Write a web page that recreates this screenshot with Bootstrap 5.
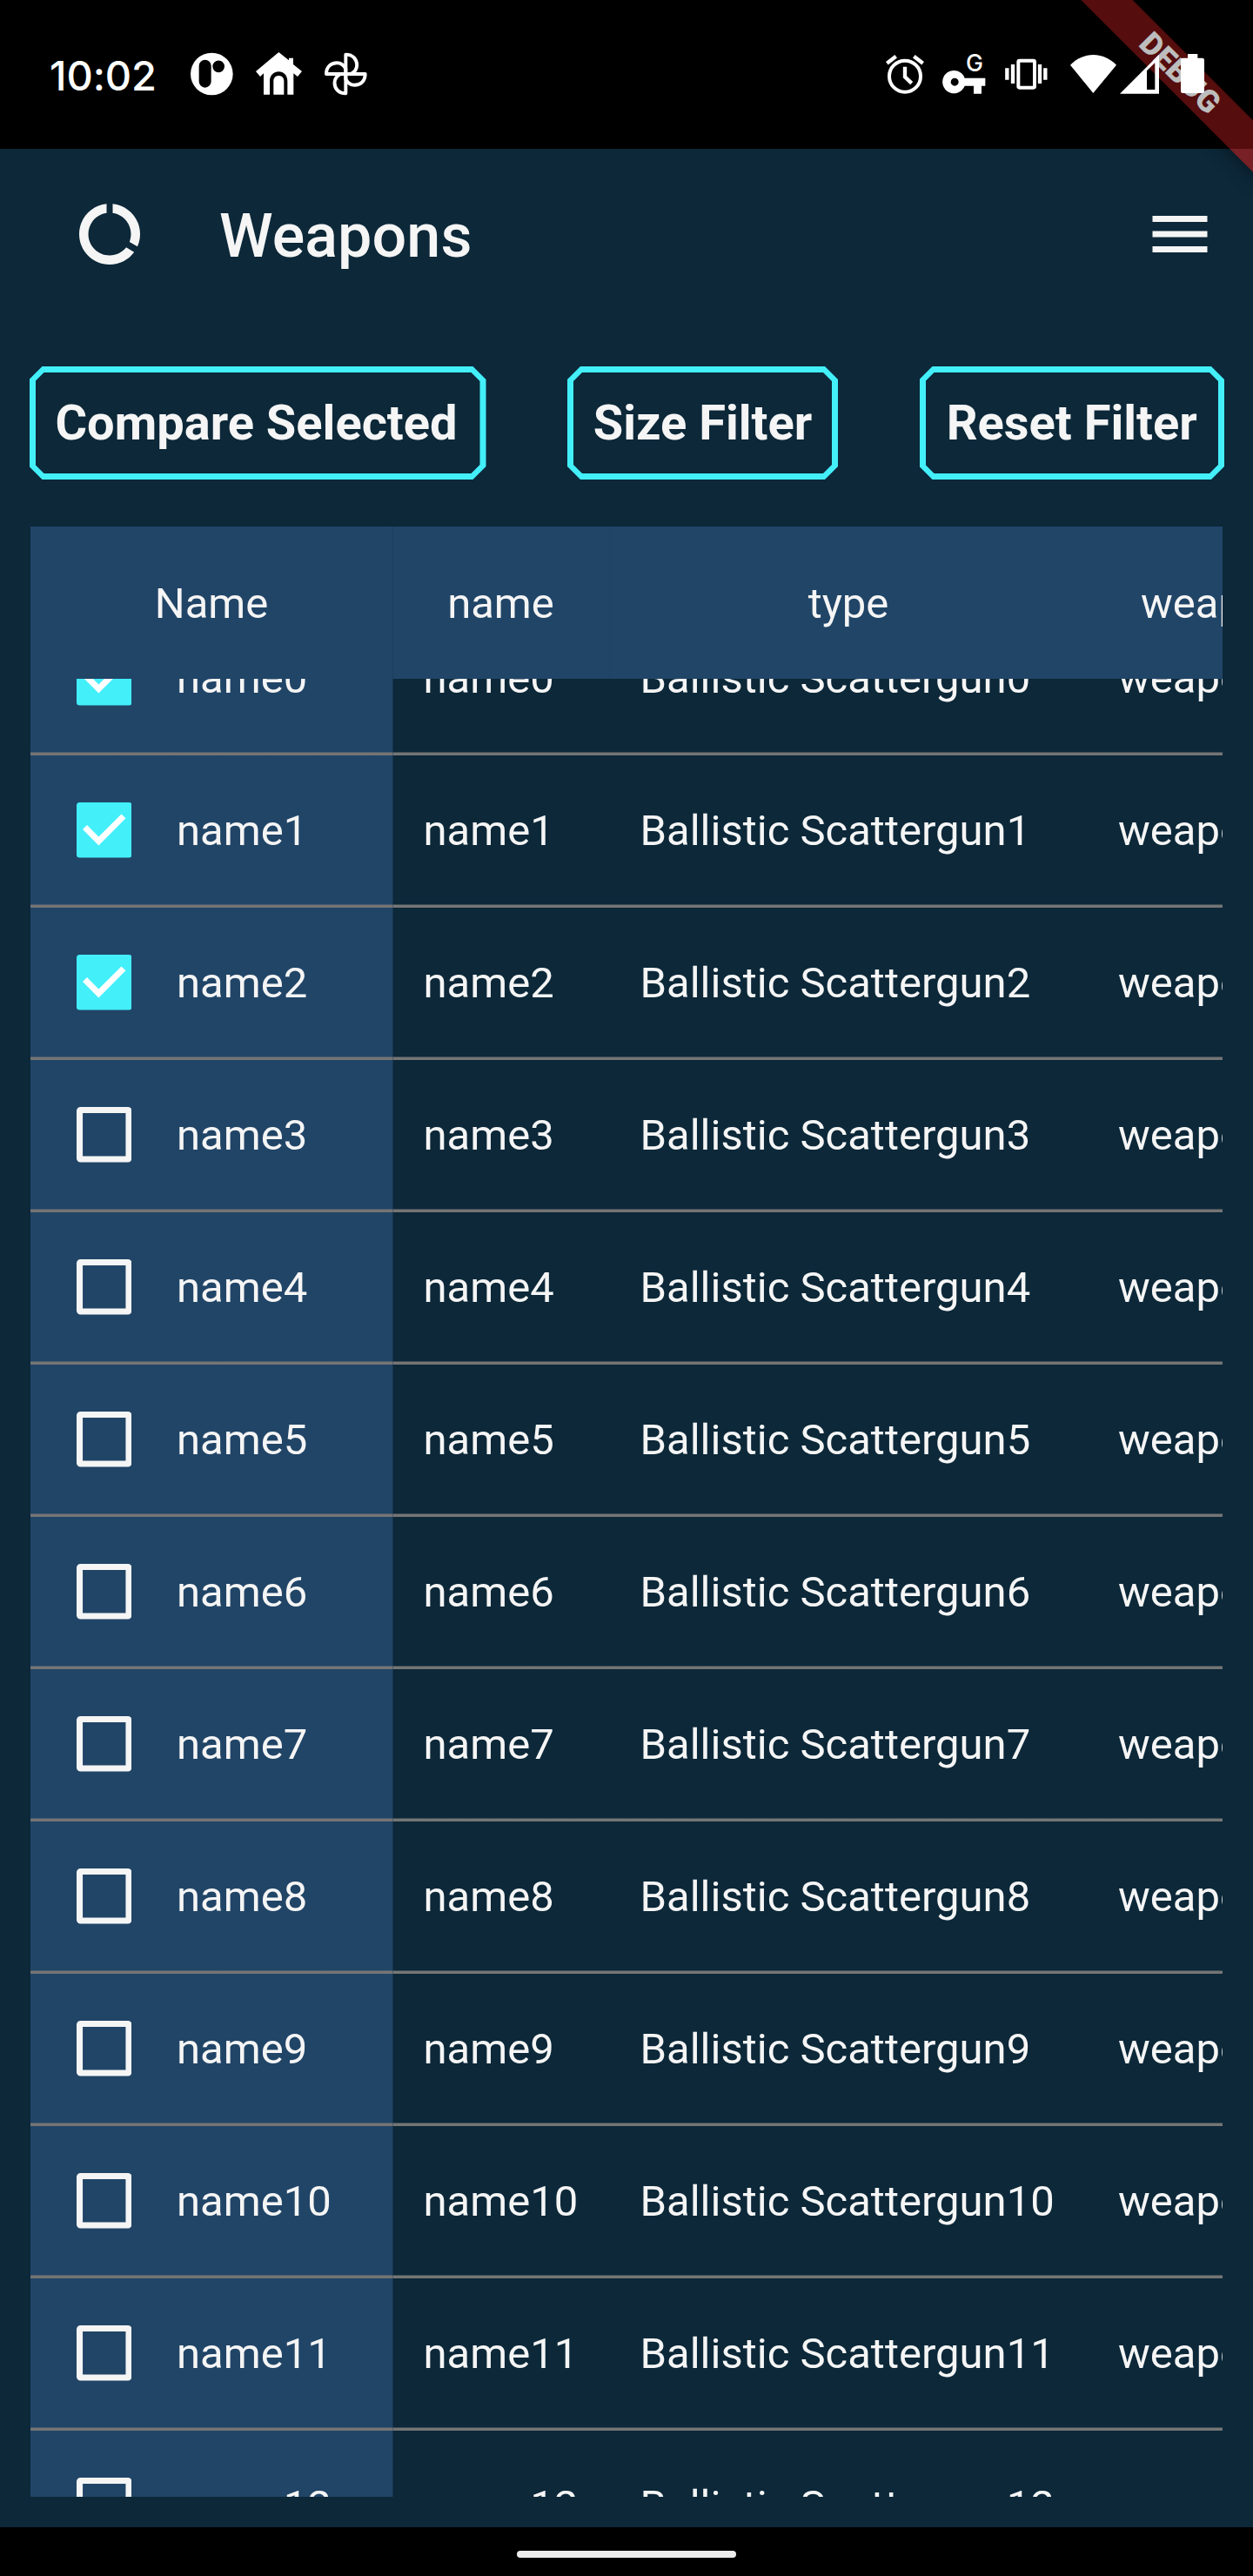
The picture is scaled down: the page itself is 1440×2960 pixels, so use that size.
<!DOCTYPE html>
<html lang="en">
<head>
<meta charset="utf-8">
<meta name="viewport" content="width=device-width, initial-scale=1">
<title>Weapons</title>
<link href="https://cdn.jsdelivr.net/npm/bootstrap@5.3.0/dist/css/bootstrap.min.css" rel="stylesheet">
<style>
  :root { --app: #0c2839; --panel: #214567; --cyan: #43eff9; --ink: #f5f5f5; }
  body { background: #000; color: var(--ink); font-family: Roboto, sans-serif; }
  .screen { width: 1440px; height: 2960px; }
  .status-bar { height: 171px; padding: 0 56px 1px 57px; background: rgba(0,0,0,.26); color: #fff; z-index: 2; }
  .status-bar svg { height: 50px; display: block; flex: none; overflow: visible; }
  .clock { font: 500 47px/50px Inter, sans-serif; letter-spacing: -.1px; width: 162px; padding-top: 3px; white-space: nowrap; }
  .gap-icon { margin-left: 26px; }
  .app { height: 2733px; background: var(--app); }
  .app-bar { height: 196px; padding: 0 42px 0 84px; }
  .app-bar svg { width: 84px; height: 84px; display: block; fill: var(--ink); }
  .app-title { font-size: 70px; line-height: 84px; font-weight: 500; letter-spacing: .1px; margin-left: 84px; padding-top: 4px; }
  .actions { padding: 54px 33px 0 33.5px; }
  .cut-btn { height: 130px; background: var(--cyan); color: var(--ink); border: 0; border-radius: 0; font-size: 56px; font-weight: 700; line-height: 130px; padding: 0; position: relative; white-space: nowrap;
    clip-path: polygon(15px 0, calc(100% - 15px) 0, 100% 15px, 100% calc(100% - 15px), calc(100% - 15px) 100%, 15px 100%, 0 calc(100% - 15px), 0 15px); }
  .cut-btn::before { content: ""; position: absolute; inset: 7px; background: var(--app);
    clip-path: polygon(10px 0, calc(100% - 10px) 0, 100% 10px, 100% calc(100% - 10px), calc(100% - 10px) 100%, 10px 100%, 0 calc(100% - 10px), 0 10px); }
  .cut-btn span { position: relative; display: block; }
  .cut-btn.wide span { padding-right: 3px; }
  .grid-box { margin: 54px 35px 0; height: 2264px; font-size: 49px; white-space: nowrap; }
  .g-head { height: 175px; background: var(--panel); }
  .g-head > div { padding-top: 2px; }
  .g-body { height: 2089px; }
  .g-scroll { margin-top: -87px; }
  .g-row { height: 175px; }
  .c-pick { width: 416px; flex: none; }
  .c-name { width: 249px; flex: none; }
  .c-type { width: 550px; flex: none; }
  .c-weapon { width: 294px; flex: none; }
  .g-head .c-name { box-shadow: inset 1px 0 #1b3e5c; }
  .g-head .c-type { box-shadow: inset 1px 0 #1e4162; }
  .g-row > div { padding: 0 0 3px 35.5px; background-image: linear-gradient(to top, #757575 3px, rgba(117,117,117,.5) 3px, rgba(117,117,117,.5) 4px, transparent 4px); }
  .g-row > div > span { padding-top: 1px; }
  .g-row .c-pick { background-color: var(--panel); padding-left: 52.5px; }
  .g-row .c-name { box-shadow: inset 1px 0 rgba(33,69,103,.45); }
  .g-row .c-weapon { padding-left: 35px; }
  .tick { width: 63.5px; height: 63.5px; margin-right: 52px; flex: none; }
  .nav-area { height: 56px; background: #000; padding-top: 27px; }
  .pill { width: 252px; height: 8px; border-radius: 4px; background: #ececec; }
  .ribbon-box { position: absolute; top: 0; right: 0; width: 260px; height: 260px; overflow: hidden; z-index: 1; }
  .ribbon { position: absolute; left: 26px; top: 63px; width: 300px; height: 42px; transform: rotate(45deg); background: rgba(183,28,28,.627); box-shadow: 0 0 21px rgba(0,0,0,.5); font-size: 35.7px; line-height: 42px; font-weight: 900; color: #fff; text-align: center; }
</style>
</head>
<body>
<div class="screen position-relative overflow-hidden">
  <div class="status-bar position-relative d-flex align-items-center">
    <div class="clock">10:02</div>
    <svg width="49" viewBox="657 181 147 150"><path fill="#fff" fill-rule="evenodd" d="M657 256a73 73 0 1 0 146 0a73 73 0 1 0-146 0zM686 228a21 21 0 0 1 42 0v54a21 21 0 0 1-42 0zM733 230a20.500 20.500 0 1 1 41 0a20.500 20.500 0 1 1-41 0z"/></svg>
    <svg class="gap-icon" width="53" viewBox="882 181 159 150"><path fill="#fff" d="M961 181L996 209V201H1011V223L1041 247L1026 265L1012 254V327H991V281C991 261 978 248 961 248S930 261 930 281V327H909V254L897 265L882 247zM943 327V281C943 268 951 262 961 262S979 268 979 281V327z"/></svg>
    <svg class="gap-icon" width="49" viewBox="1118 181 149 150"><g fill="none" stroke="#fff" stroke-width="12" stroke-linejoin="round"><path d="M1192 256V188C1218 188 1231 206 1231 225C1231 240 1222 250 1210 256z"/><path d="M1192 256V188C1218 188 1231 206 1231 225C1231 240 1222 250 1210 256z" transform="rotate(90 1192 256)"/><path d="M1192 256V188C1218 188 1231 206 1231 225C1231 240 1222 250 1210 256z" transform="rotate(180 1192 256)"/><path d="M1192 256V188C1218 188 1231 206 1231 225C1231 240 1222 250 1210 256z" transform="rotate(270 1192 256)"/></g></svg>

    <svg class="ms-auto" width="44" viewBox="114 181 132 150"><g fill="none" stroke="#fff"><circle cx="180" cy="264" r="54" stroke-width="12"/><path d="M180 231V266L203 288" stroke-width="13"/><path d="M118 219L149 195M211 195L242 219" stroke-width="13"/></g></svg>
    <svg width="50" viewBox="309 181 150 150" style="margin-left:21px"><path fill="#fff" fill-rule="evenodd" d="M386 270H457V297H444V324H417V297H386A39.500 39.500 0 1 1 386 270zM338 283.500a13.500 13.500 0 1 0 27 0a13.500 13.500 0 1 0-27 0z"/><text x="420" y="247" text-anchor="middle" font-family="Inter, sans-serif" font-weight="500" font-size="80" fill="#fff">G</text></svg>
    <svg width="49" viewBox="525 181 147 150" style="margin-left:22px"><rect x="571" y="210" width="56" height="93" rx="4" fill="none" stroke="#fff" stroke-width="12"/><path d="M532 236V276M552 223V289M645 223V289M664 236V276" stroke="#fff" stroke-width="13"/></svg>
    <svg class="gap-icon" width="53" viewBox="750 181 159 150"><path fill="#fff" d="M829 322L750 225C796 178 862 178 909 225z"/></svg>
    <svg width="45" viewBox="921 181 135 150" style="margin-left:4px"><path fill="#fff" fill-rule="evenodd" d="M921 324L1056 189V324zM1014 245V310H1042V217z"/></svg>
    <svg width="27" viewBox="1131 181 81 150" style="margin-left:25px"><path fill="#fff" d="M1155 187H1189V201H1205Q1212 201 1212 208V315Q1212 322 1205 322H1138Q1131 322 1131 315V208Q1131 201 1138 201H1155z"/></svg>
  </div>

  <main class="app">
    <header class="app-bar d-flex align-items-center">
      <svg viewBox="0 0 24 24"><path d="M13 2.050v3.030c3.390.49 6 3.390 6 6.920 0 .9-.18 1.750-.48 2.540l2.600 1.530c.56-1.240.88-2.620.88-4.070 0-5.180-3.950-9.450-9-9.950zM12 19c-3.870 0-7-3.130-7-7 0-3.530 2.610-6.430 6-6.920V2.050c-5.060.5-9 4.760-9 9.950 0 5.520 4.470 10 9.990 10 3.310 0 6.240-1.610 8.060-4.090l-2.600-1.530C16.170 17.980 14.210 19 12 19z"/></svg>
      <div class="app-title">Weapons</div>
      <svg class="ms-auto" viewBox="0 0 24 24"><path d="M3 18h18v-2H3v2zm0-5h18v-2H3v2zm0-7v2h18V6H3z"/></svg>
    </header>

    <div class="actions d-flex justify-content-between">
      <button class="btn cut-btn wide" style="width:525px"><span>Compare Selected</span></button>
      <button class="btn cut-btn" style="width:311px"><span>Size Filter</span></button>
      <button class="btn cut-btn" style="width:350.500px"><span>Reset Filter</span></button>
    </div>

    <section class="grid-box overflow-hidden">
      <div class="g-head d-flex text-center align-items-stretch">
        <div class="c-pick d-flex align-items-center justify-content-center">Name</div>
        <div class="c-name d-flex align-items-center justify-content-center">name</div>
        <div class="c-type d-flex align-items-center justify-content-center">type</div>
        <div class="c-weapon d-flex align-items-center justify-content-center">weapon</div>
      </div>
      <div class="g-body overflow-hidden"><div class="g-scroll" id="rows"></div></div>
    </section>
  </main>

  <div class="nav-area d-flex justify-content-center"><div class="pill"></div></div>
  <div class="ribbon-box"><div class="ribbon">DEBUG</div></div>
</div>
<script src="https://cdn.jsdelivr.net/npm/bootstrap@5.3.0/dist/js/bootstrap.bundle.min.js"></script>
<script>
  const on = '<svg class="tick" viewBox="0 0 63 63"><rect width="63" height="63" rx="3.5" fill="#43eff9"/><path d="M9.450 28.350L25.200 44.100L53.550 15.750" fill="none" stroke="#fff" stroke-width="7"/></svg>';
  const off = '<svg class="tick" viewBox="0 0 63 63"><rect x="3.5" y="3.5" width="56" height="56" rx="1" fill="none" stroke="#f5f5f5" stroke-width="7" stroke-linejoin="round"/></svg>';
  let html = '';
  for (let i = 0; i < 13; i++) {
    html += `<div class="g-row d-flex">
      <div class="c-pick d-flex align-items-center">${i < 3 ? on : off}<span>name${i}</span></div>
      <div class="c-name d-flex align-items-center"><span>name${i}</span></div>
      <div class="c-type d-flex align-items-center"><span>Ballistic Scattergun${i}</span></div>
      <div class="c-weapon d-flex align-items-center"><span>weapon${i}</span></div>
    </div>`;
  }
  document.getElementById('rows').innerHTML = html;
</script>
</body>
</html>
